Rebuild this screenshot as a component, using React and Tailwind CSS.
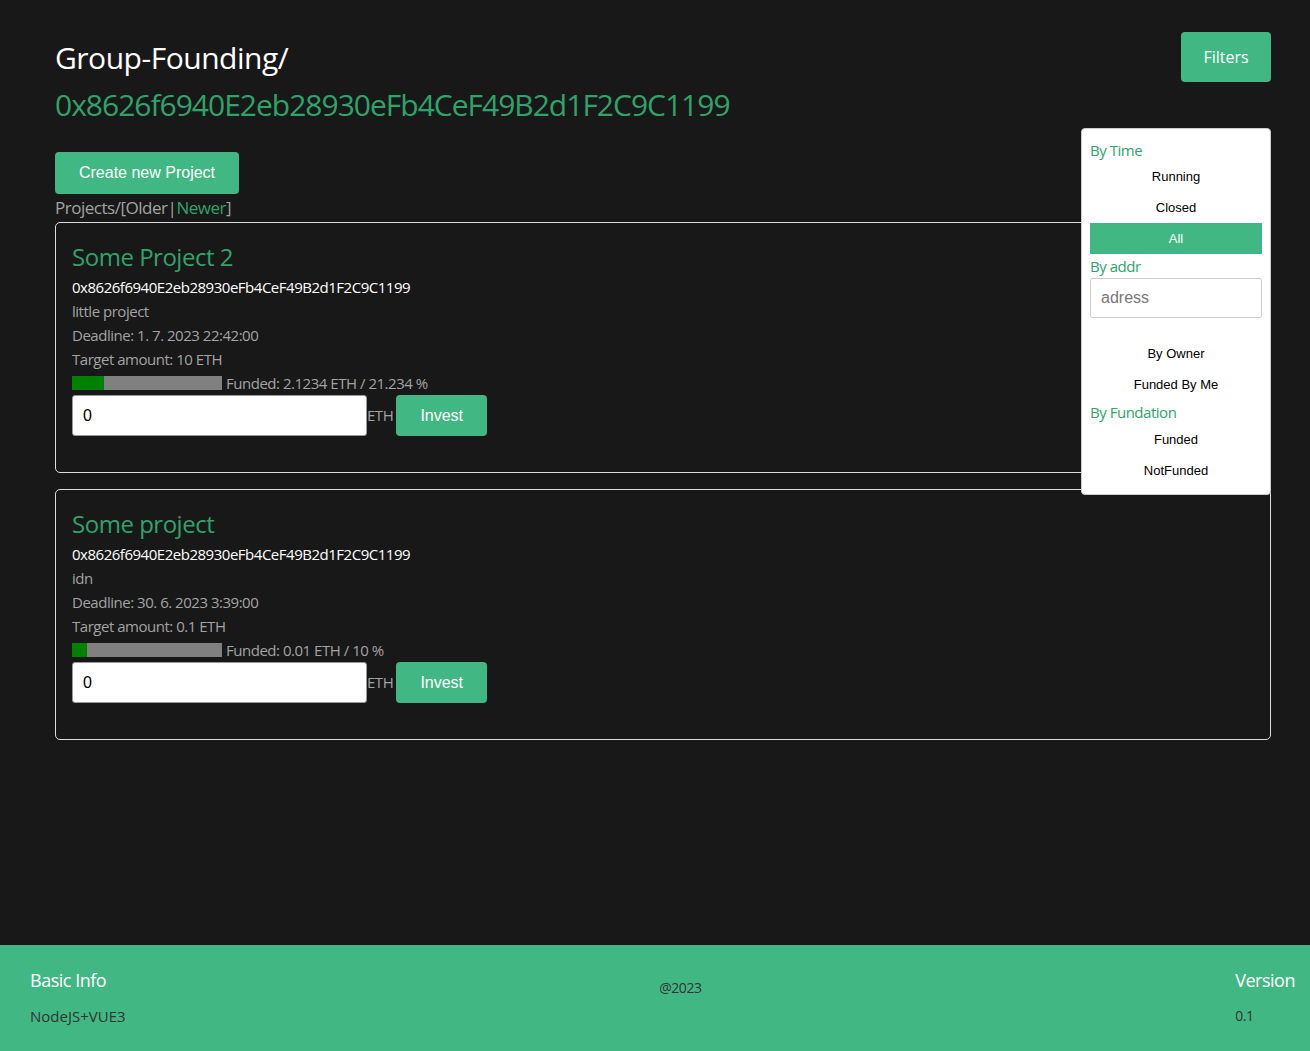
import React, { useState } from 'react';

const ADDR = '0x8626f6940E2eb28930eFb4CeF49B2d1F2C9C1199';

const projects = [
  {
    id: 2,
    name: 'Some Project 2',
    owner: ADDR,
    description: 'little project',
    deadline: '1. 7. 2023 22:42:00',
    target: '10',
    funded: '2.1234',
    percent: 21.234,
  },
  {
    id: 1,
    name: 'Some project',
    owner: ADDR,
    description: 'idn',
    deadline: '30. 6. 2023 3:39:00',
    target: '0.1',
    funded: '0.01',
    percent: 10,
  },
];

const FilterItem = ({ label, active, onClick }) => (
  <button
    onClick={onClick}
    className={
      'block w-full h-[31px] text-center text-[13px] tracking-normal font-["Liberation_Sans",Arial,sans-serif] ' +
      (active ? 'bg-[#41b883] text-white' : 'text-black')
    }
  >
    {label}
  </button>
);

const FilterPanel = () => {
  const [time, setTime] = useState('All');
  return (
    <div className="absolute right-0 top-[96px] w-[190px] bg-white border border-[#ccc] rounded-[4px] px-[8px] pt-[10px] pb-[8px] z-10">
      <div className="text-[15px] leading-[22px] text-[#2fa36c]">By Time</div>
      <FilterItem label="Running" active={time === 'Running'} onClick={() => setTime('Running')} />
      <FilterItem label="Closed" active={time === 'Closed'} onClick={() => setTime('Closed')} />
      <FilterItem label="All" active={time === 'All'} onClick={() => setTime('All')} />
      <div className="text-[15px] leading-[24px] text-[#2fa36c]">By addr</div>
      <input
        placeholder="adress"
        className="w-full h-[40px] border border-[#ccc] rounded-[3px] px-[10px] text-[16px] tracking-normal font-['Liberation_Sans',Arial,sans-serif] placeholder:text-[#777] outline-none"
      />
      <div className="h-[20px]" />
      <FilterItem label="By Owner" />
      <FilterItem label="Funded By Me" />
      <div className="text-[15px] leading-[24px] text-[#2fa36c]">By Fundation</div>
      <FilterItem label="Funded" />
      <FilterItem label="NotFunded" />
    </div>
  );
};

const ProjectCard = ({ p }) => {
  const [amount, setAmount] = useState('0');
  return (
    <div className="border border-[#ddd] rounded-[5px] px-4 pt-4 pb-[36px]">
      <h2 className="text-[24px] leading-[36px] text-[#2fa36c]">{p.name}</h2>
      <div className="text-[15px] leading-[24px] text-white">{p.owner}</div>
      <div className="text-[15px] leading-[24px] text-[#a3a3a3]">{p.description}</div>
      <div className="text-[15px] leading-[24px] text-[#a3a3a3]">Deadline: {p.deadline}</div>
      <div className="text-[15px] leading-[24px] text-[#a3a3a3]">Target amount: {p.target} ETH</div>
      <div className="flex items-center h-[24px]">
        <div className="w-[150px] h-[14px] bg-[#808080]">
          <div className="h-full bg-[#008000]" style={{ width: p.percent + '%' }} />
        </div>
        <span className="ml-[4px] text-[15px] text-[#a3a3a3]">
          Funded: {p.funded} ETH / {p.percent} %
        </span>
      </div>
      <div className="flex items-center">
        <input
          value={amount}
          onChange={e => setAmount(e.target.value)}
          className="w-[295px] h-[41px] bg-white border border-[#999] rounded-[3px] px-[10px] text-[16px] text-black tracking-normal font-['Liberation_Sans',Arial,sans-serif] outline-none"
        />
        <span className="text-[15px] text-[#a3a3a3]">ETH</span>
        <button className="ml-[3px] w-[91px] h-[41px] bg-[#41b883] rounded-[4px] text-white text-[16px] tracking-normal font-['Liberation_Sans',Arial,sans-serif]">
          Invest
        </button>
      </div>
    </div>
  );
};

const App = () => {
  return (
    <div className="min-h-screen flex flex-col bg-[#181818] tracking-[-0.03em] font-['Open_Sans','Noto_Sans',sans-serif]">
      <main className="flex-1 pl-[55px] pr-[39px] pt-[32px]">
        <div className="relative">
          <div className="flex justify-between items-start">
            <div className="pt-[6px]">
              <h1 className="text-[30px] leading-[40px] text-white">Group-Founding/</h1>
              <div className="text-[30px] leading-[48px] text-[#2fa36c] mt-[3px] tracking-[-1px]">{ADDR}</div>
            </div>
            <button className="w-[90px] h-[50px] bg-[#41b883] rounded-[4px] text-white text-[16px] tracking-normal">
              Filters
            </button>
          </div>
          <FilterPanel />
          <button className="mt-[23px] w-[184px] h-[42px] bg-[#41b883] rounded-[4px] text-white text-[16px] tracking-normal font-['Liberation_Sans',Arial,sans-serif]">
            Create new Project
          </button>
          <div className="text-[17px] leading-[28px] text-[#a3a3a3]">
            Projects/[Older|<span className="text-[#2fa36c]">Newer</span>]
          </div>
          <div className="flex flex-col gap-[16px]">
            {projects.map(p => (
              <ProjectCard key={p.id} p={p} />
            ))}
          </div>
        </div>
      </main>
      <footer className="h-[106px] bg-[#41b883] px-[15px] flex justify-between items-start pt-[22px]">
        <div className="pl-[15px]">
          <div className="text-[18px] leading-[26px] text-white">Basic Info</div>
          <div className="text-[15px] leading-[20px] text-[#333] mt-[13px] tracking-normal">NodeJS+VUE3</div>
        </div>
        <div className="text-[14px] text-[#333] mt-[10px]">@2023</div>
        <div>
          <div className="text-[18px] leading-[26px] text-white">Version</div>
          <div className="text-[14px] leading-[20px] text-[#333] mt-[13px]">0.1</div>
        </div>
      </footer>
    </div>
  );
};

export default App;
